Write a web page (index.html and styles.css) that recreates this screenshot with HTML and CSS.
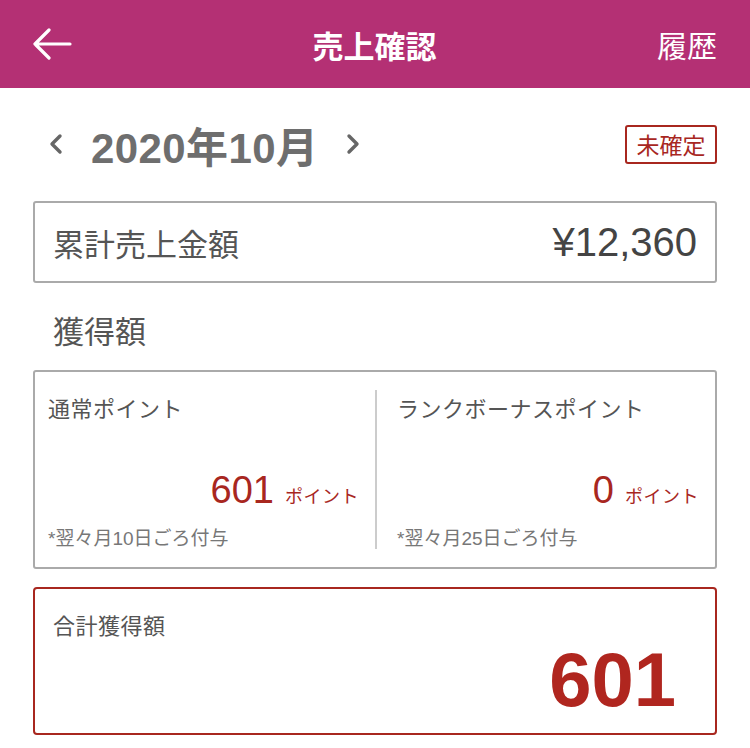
FILE: index.html
```html
<!doctype html>
<html lang = "ja">
    <head>
        <meta charset = "utf-8" />
        <meta name = "viewport" content = "width=device-width, initial-scale=1.0">

        <!-- CSS -->
        <link rel="stylesheet" href="styles.css">

        <title>売上確認</title>
    </head>
    <body>
        <header class = "topbar">
            <a class = "back" href = "#">
                <svg width = "40" height = "32" viewBox = "0 0 40 32">
                    <path d = "M38 16H3M17 2L3 16l14 14" fill = "none" stroke = "#fff" stroke-width = "3.2" stroke-linecap = "round" stroke-linejoin = "round" />
                </svg>
            </a>
            <h1>売上確認</h1>
            <a class = "history" href = "#">履歴</a>
        </header>

        <main>
            <div class = "month-row">
                <div class = "month-nav">
                    <svg class = "chev" width = "16" height = "22" viewBox = "0 0 16 22">
                        <path d = "M12 3L4 11l8 8" fill = "none" stroke = "#666" stroke-width = "3.4" stroke-linecap = "round" stroke-linejoin = "round" />
                    </svg>
                    <span class = "month">2020年10月</span>
                    <svg class = "chev" width = "16" height = "22" viewBox = "0 0 16 22">
                        <path d = "M4 3l8 8-8 8" fill = "none" stroke = "#666" stroke-width = "3.4" stroke-linecap = "round" stroke-linejoin = "round" />
                    </svg>
                </div>
                <span class = "badge">未確定</span>
            </div>

            <div class = "total-sales">
                <span>累計売上金額</span>
                <span class = "amount">¥12,360</span>
            </div>

            <h2>獲得額</h2>

            <div class = "points">
                <div class = "points-col">
                    <span class = "label">通常ポイント</span>
                    <div class = "value"><span class = "num">601</span><span class = "unit">ポイント</span></div>
                    <span class = "note">*翌々月10日ごろ付与</span>
                </div>
                <div class = "points-col">
                    <span class = "label">ランクボーナスポイント</span>
                    <div class = "value"><span class = "num">0</span><span class = "unit">ポイント</span></div>
                    <span class = "note">*翌々月25日ごろ付与</span>
                </div>
            </div>

            <div class = "grand-total">
                <span class = "label">合計獲得額</span>
                <span class = "big">601</span>
            </div>
        </main>
    </body>
</html>
```

FILE: styles.css
```css
* {
    margin: 0px;
    box-sizing: border-box;
    font-family: "Liberation Sans", "Noto Sans CJK JP", sans-serif;
}
a {
    color: #fff;
    text-decoration: none;
}
body {
    background-color: #fff;
    color: #555;
}
.topbar {
    height: 88px;
    display: flex;
    align-items: center;
    justify-content: space-between;
    padding: 0 33px 0 32px;
    background-color: #b43074;
    color: #fff;
}
.back {
    width: 60px;
    display: flex;
}
.topbar h1 {
    font-size: 31px;
    font-weight: bold;
}
.history {
    width: 60px;
    font-size: 30px;
    text-align: right;
}
main {
    padding: 36px 33px 0 33px;
    display: flex;
    flex-direction: column;
}
.month-row {
    height: 40px;
    display: flex;
    align-items: center;
    justify-content: space-between;
}
.month-nav {
    display: flex;
    align-items: center;
    gap: 27px;
    padding-left: 15px;
}
.month {
    font-size: 42px;
    font-weight: bold;
    color: #6e6e6e;
    letter-spacing: 0.4px;
}
.badge {
    width: 92px;
    height: 39px;
    border: 2px solid #a8271f;
    border-radius: 3px;
    color: #a8271f;
    font-size: 23px;
    display: flex;
    align-items: center;
    justify-content: center;
}
.total-sales {
    margin-top: 37px;
    height: 82px;
    border: 2px solid #aaa;
    border-radius: 3px;
    padding: 0 18px;
    display: flex;
    align-items: center;
    justify-content: space-between;
    font-size: 31px;
}
.amount {
    font-size: 40px;
    color: #444;
}
h2 {
    margin-top: 30px;
    line-height: 40px;
    padding-left: 20px;
    font-size: 31px;
    font-weight: normal;
    color: #555;
}
.points {
    margin-top: 17px;
    height: 199px;
    border: 2px solid #aaa;
    border-radius: 3px;
    padding: 18px 0;
    display: flex;
}
.points-col {
    flex: 1;
    display: flex;
    flex-direction: column;
    padding: 0 16px 0 20px;
}
.points-col:first-child {
    flex: none;
    width: 342px;
    border-right: 2px solid #ccc;
    padding: 0 16px 0 13px;
}
.label {
    margin-top: 5px;
    line-height: 30px;
    font-size: 22px;
    letter-spacing: 0.5px;
    color: #555;
}
.value {
    margin-top: 45px;
    height: 40px;
    display: flex;
    justify-content: flex-end;
    align-items: baseline;
    gap: 11px;
    color: #a8271f;
}
.num {
    font-size: 38px;
    line-height: 40px;
}
.unit {
    font-size: 18px;
    letter-spacing: 0.5px;
}
.note {
    margin-top: 17px;
    line-height: 24px;
    font-size: 19px;
    color: #777;
}
.grand-total {
    margin-top: 18px;
    height: 148px;
    border: 2px solid #a8271f;
    border-radius: 4px;
    padding: 23px 39px 15px 18px;
    display: flex;
    flex-direction: column;
}
.grand-total .label {
    margin-top: 0px;
}
.big {
    align-self: flex-end;
    font-size: 76px;
    line-height: 76px;
    font-weight: bold;
    color: #b0261f;
}
```
